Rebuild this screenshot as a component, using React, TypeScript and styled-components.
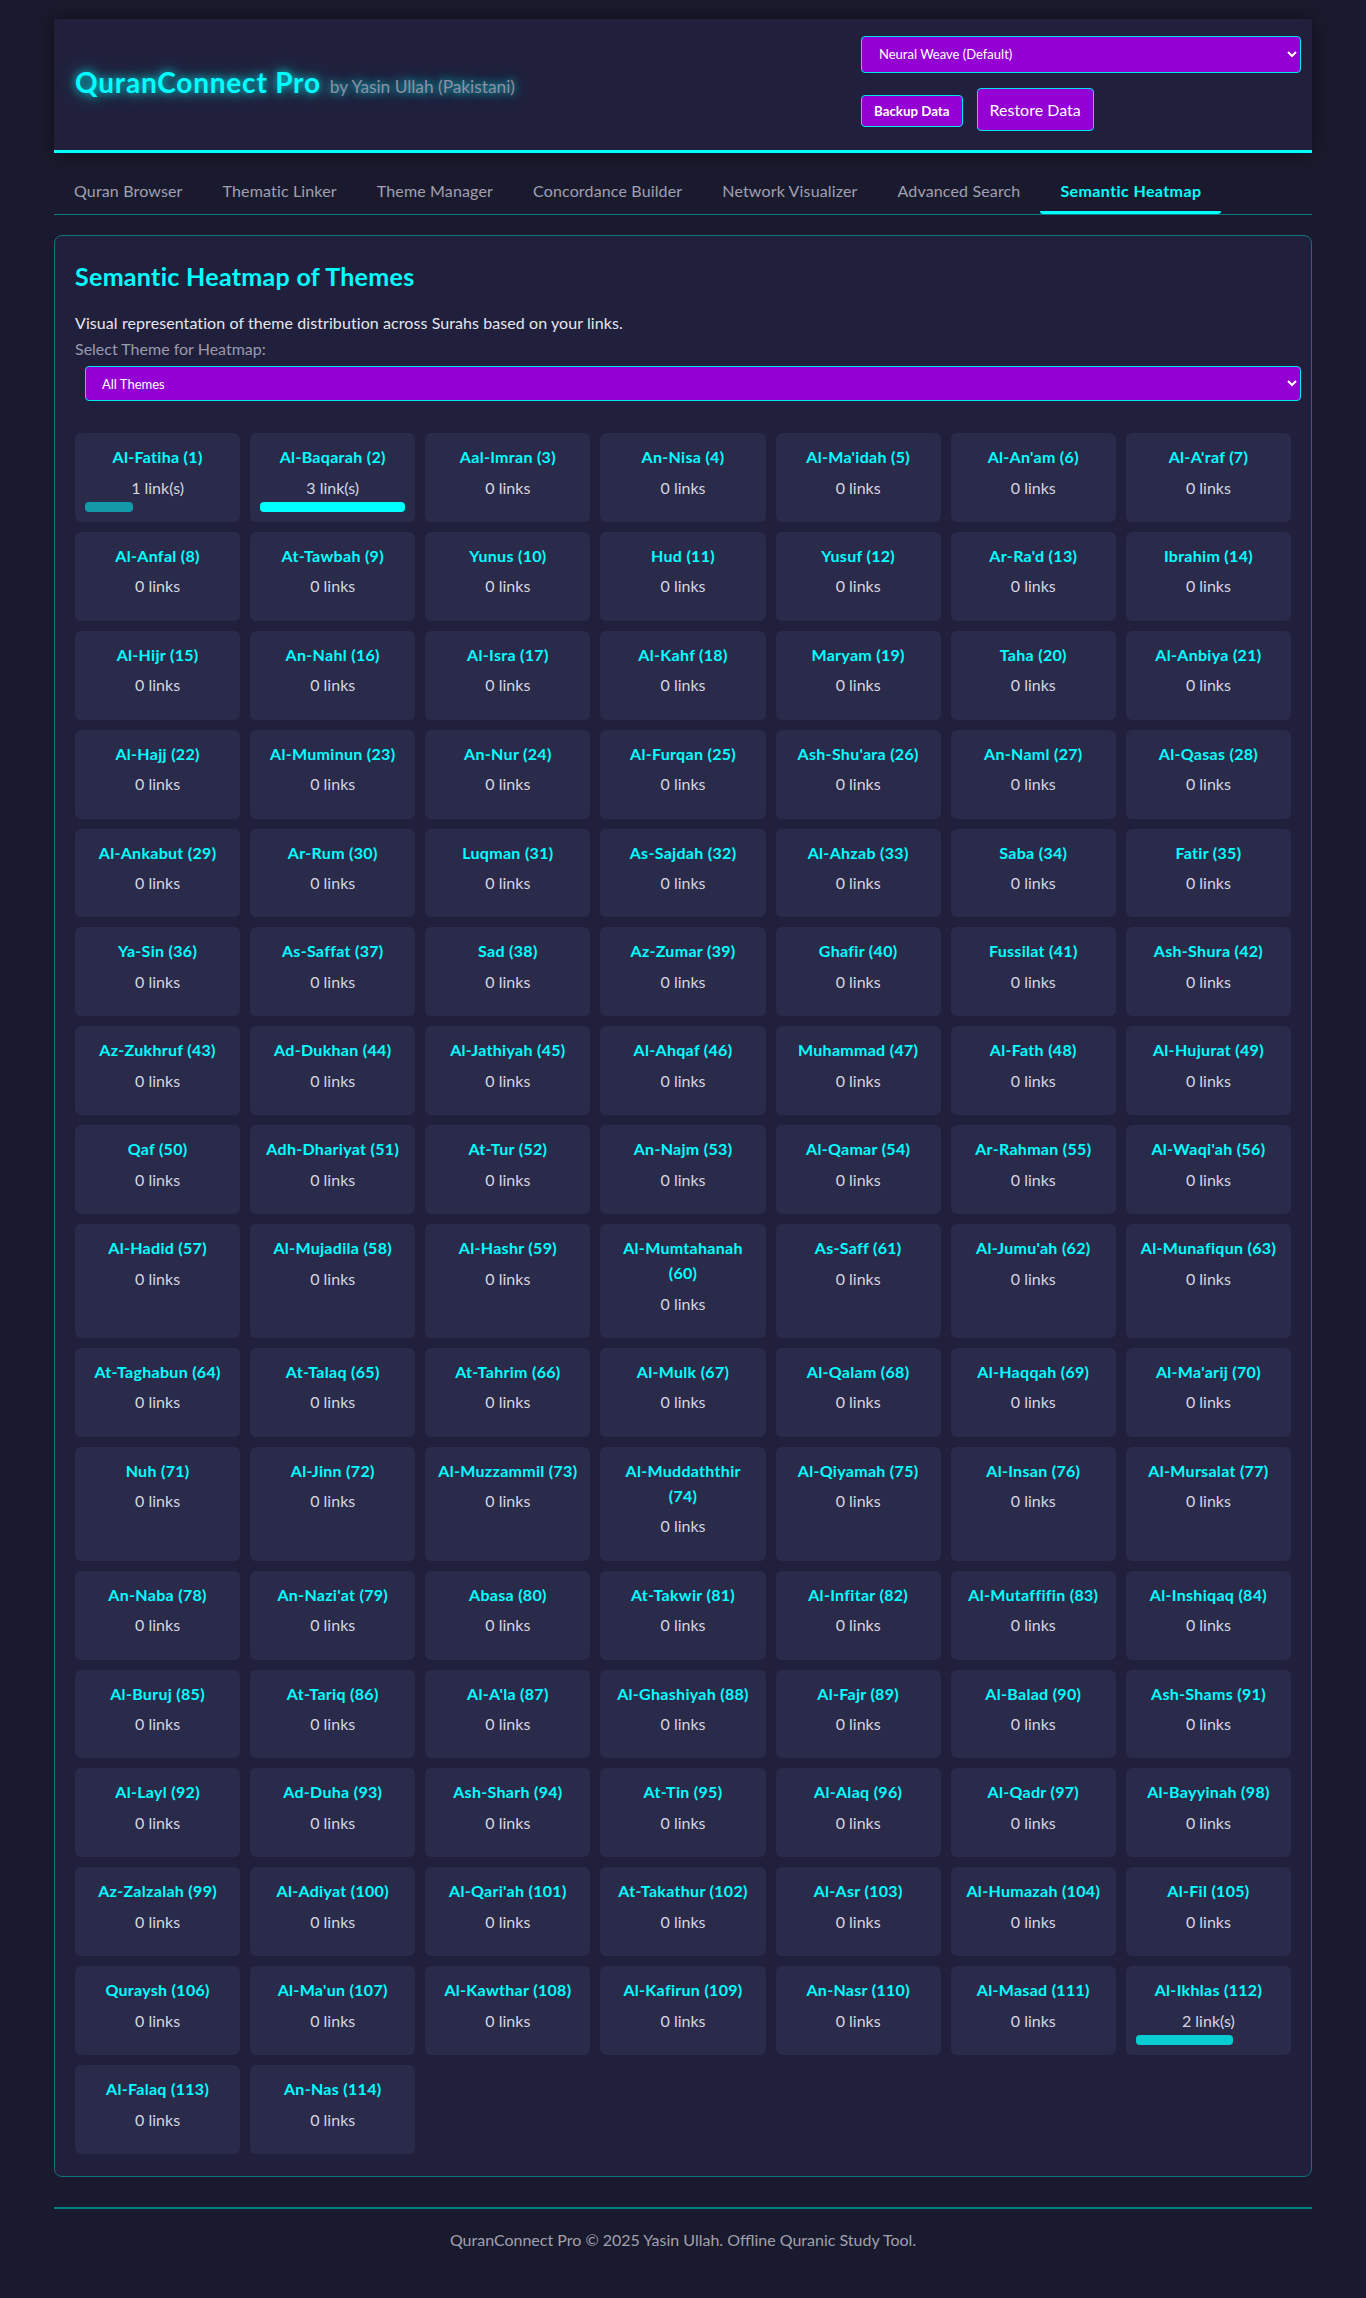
import React from "react";
import styled, { createGlobalStyle, css } from "styled-components";

const GlobalStyle = createGlobalStyle`
  html, body {
    margin: 0;
    padding: 0;
    background: #1a1a2e;
  }
  body {
    font-family: Lato, "Open Sans", "Liberation Sans", sans-serif;
    color: #e0e0e0;
    font-size: 16px;
    line-height: 1.6;
  }
  *, *::before, *::after {
    box-sizing: border-box;
  }
`;

const SURAHS = [
  "Al-Fatiha", "Al-Baqarah", "Aal-Imran", "An-Nisa", "Al-Ma'idah", "Al-An'am", "Al-A'raf",
  "Al-Anfal", "At-Tawbah", "Yunus", "Hud", "Yusuf", "Ar-Ra'd", "Ibrahim",
  "Al-Hijr", "An-Nahl", "Al-Isra", "Al-Kahf", "Maryam", "Taha", "Al-Anbiya",
  "Al-Hajj", "Al-Muminun", "An-Nur", "Al-Furqan", "Ash-Shu'ara", "An-Naml", "Al-Qasas",
  "Al-Ankabut", "Ar-Rum", "Luqman", "As-Sajdah", "Al-Ahzab", "Saba", "Fatir",
  "Ya-Sin", "As-Saffat", "Sad", "Az-Zumar", "Ghafir", "Fussilat", "Ash-Shura",
  "Az-Zukhruf", "Ad-Dukhan", "Al-Jathiyah", "Al-Ahqaf", "Muhammad", "Al-Fath", "Al-Hujurat",
  "Qaf", "Adh-Dhariyat", "At-Tur", "An-Najm", "Al-Qamar", "Ar-Rahman", "Al-Waqi'ah",
  "Al-Hadid", "Al-Mujadila", "Al-Hashr", "Al-Mumtahanah", "As-Saff", "Al-Jumu'ah", "Al-Munafiqun",
  "At-Taghabun", "At-Talaq", "At-Tahrim", "Al-Mulk", "Al-Qalam", "Al-Haqqah", "Al-Ma'arij",
  "Nuh", "Al-Jinn", "Al-Muzzammil", "Al-Muddaththir", "Al-Qiyamah", "Al-Insan", "Al-Mursalat",
  "An-Naba", "An-Nazi'at", "Abasa", "At-Takwir", "Al-Infitar", "Al-Mutaffifin", "Al-Inshiqaq",
  "Al-Buruj", "At-Tariq", "Al-A'la", "Al-Ghashiyah", "Al-Fajr", "Al-Balad", "Ash-Shams",
  "Al-Layl", "Ad-Duha", "Ash-Sharh", "At-Tin", "Al-Alaq", "Al-Qadr", "Al-Bayyinah",
  "Az-Zalzalah", "Al-Adiyat", "Al-Qari'ah", "At-Takathur", "Al-Asr", "Al-Humazah", "Al-Fil",
  "Quraysh", "Al-Ma'un", "Al-Kawthar", "Al-Kafirun", "An-Nasr", "Al-Masad", "Al-Ikhlas",
  "Al-Falaq", "An-Nas",
];

const LINK_COUNTS: Record<number, number> = { 1: 1, 2: 3, 112: 2 };

const TABS = [
  "Quran Browser",
  "Thematic Linker",
  "Theme Manager",
  "Concordance Builder",
  "Network Visualizer",
  "Advanced Search",
  "Semantic Heatmap",
];

const Page = styled.div`
  width: 1258px;
  margin: 0 auto;
  padding: 19px 0 25px;
`;

const Header = styled.header`
  display: flex;
  justify-content: space-between;
  align-items: center;
  height: 134px;
  padding: 16px 11px 19px 21px;
  background: #20203c;
  border-bottom: 3px solid #00ffff;
  box-shadow: 0 0 18px rgba(0, 0, 0, 0.45);
`;

const Title = styled.h1`
  margin: 0;
  font-size: 28px;
  font-weight: 700;
  letter-spacing: 0.8px;
  line-height: 1.2;
  color: #00ffff;
  text-shadow: 0 0 8px rgba(0, 255, 255, 0.8), 0 0 18px rgba(0, 255, 255, 0.45);
`;

const Byline = styled.span`
  margin-left: 9px;
  font-size: 17.3px;
  font-weight: 400;
  letter-spacing: 0;
  color: #8e8ea4;
`;

const Controls = styled.div`
  display: flex;
  flex-direction: column;
  width: 440px;
`;

const purpleControl = css`
  background: #9400d3;
  color: #ffffff;
  border: 1px solid #00e5ee;
  border-radius: 4px;
  font-family: Lato, "Open Sans", sans-serif;
`;

const Select = styled.select<{ $inset?: boolean }>`
  ${purpleControl};
  display: block;
  width: 100%;
  height: ${(p) => (p.$inset ? "35px" : "37px")};
  padding: 0 ${(p) => (p.$inset ? "12px" : "13px")};
  font-size: 13px;
  margin: ${(p) => (p.$inset ? "5px 0 32px 10px" : "0")};
  outline: none;
`;

const ButtonRow = styled.div`
  display: flex;
  align-items: flex-start;
  gap: 14px;
  margin-top: 15px;
`;

const ActionButton = styled.button<{ $large?: boolean }>`
  ${purpleControl};
  cursor: pointer;
  ${(p) =>
    p.$large
      ? css`
          height: 43px;
          padding: 0 12px;
          font-size: 16px;
          font-weight: 400;
        `
      : css`
          height: 32px;
          margin-top: 7px;
          padding: 0 12px;
          font-size: 13.3px;
          font-weight: 700;
        `}
`;

const Nav = styled.nav`
  display: flex;
  margin-top: 18px;
  border-bottom: 1px solid #0b7c80;
`;

const Tab = styled.button<{ $active?: boolean }>`
  background: none;
  border: none;
  border-bottom: 3px solid ${(p) => (p.$active ? "#00ffff" : "transparent")};
  border-radius: 0 0 3px 3px;
  padding: 10px 20px;
  font-family: Lato, "Open Sans", sans-serif;
  font-size: 16px;
  line-height: 20px;
  letter-spacing: ${(p) => (p.$active ? "0.4px" : "0.15px")};
  font-weight: ${(p) => (p.$active ? 700 : 400)};
  color: ${(p) => (p.$active ? "#00ffff" : "#a0a0b0")};
  cursor: pointer;
`;

const Panel = styled.section`
  margin-top: 20px;
  padding: 20px 20px 22px;
  background: #20203c;
  border: 1px solid #13717a;
  border-radius: 8px;
`;

const Heading = styled.h2`
  margin: 4px 0 0;
  font-size: 25px;
  line-height: 32px;
  letter-spacing: 0.3px;
  font-weight: 700;
  color: #00ffff;
`;

const Description = styled.p`
  margin: 19px 0 2px;
  font-size: 16px;
  line-height: 24px;
  letter-spacing: 0.08px;
  color: #e6e6ee;
`;

const Label = styled.label`
  display: block;
  font-size: 16px;
  line-height: 24px;
  color: #9a9aac;
`;

const Grid = styled.div`
  display: grid;
  grid-template-columns: repeat(auto-fill, minmax(150px, 1fr));
  gap: 10px;
`;

const Cell = styled.div`
  padding: 10px;
  background: #2a2a4a;
  border-radius: 6px;
  text-align: center;
`;

const SurahName = styled.div`
  margin-top: 1px;
  font-size: 16px;
  line-height: 25px;
  letter-spacing: 0.3px;
  font-weight: 700;
  color: #00ffff;
`;

const LinkCount = styled.div`
  margin-top: 5.6px;
  font-size: 16px;
  line-height: 25.6px;
  color: #d6d6e0;
`;

const BarTrack = styled.div`
  margin-top: 1.7px;
  height: 10px;
`;

const Bar = styled.div`
  height: 100%;
  border-radius: 4px;
`;

const Footer = styled.footer`
  margin-top: 30px;
  padding: 19px 0 20px;
  border-top: 2px solid #008080;
  text-align: center;
  font-size: 16px;
  line-height: 24px;
  color: #a0a0ac;
`;

export default function App() {
  const max = Math.max(...Object.values(LINK_COUNTS));
  return (
    <>
      <GlobalStyle />
      <Page>
        <Header>
          <Title>
            QuranConnect Pro<Byline>by Yasin Ullah (Pakistani)</Byline>
          </Title>
          <Controls>
            <Select defaultValue="neural">
              <option value="neural">Neural Weave (Default)</option>
            </Select>
            <ButtonRow>
              <ActionButton>Backup Data</ActionButton>
              <ActionButton $large>Restore Data</ActionButton>
            </ButtonRow>
          </Controls>
        </Header>
        <Nav>
          {TABS.map((t) => (
            <Tab key={t} $active={t === "Semantic Heatmap"}>
              {t}
            </Tab>
          ))}
        </Nav>
        <Panel>
          <Heading>Semantic Heatmap of Themes</Heading>
          <Description>
            Visual representation of theme distribution across Surahs based on your links.
          </Description>
          <Label htmlFor="heatmap-theme">Select Theme for Heatmap:</Label>
          <Select id="heatmap-theme" $inset defaultValue="all">
            <option value="all">All Themes</option>
          </Select>
          <Grid>
            {SURAHS.map((name, i) => {
              const n = i + 1;
              const count = LINK_COUNTS[n] || 0;
              const ratio = count / max;
              const alpha = 0.28 + 0.72 * ratio;
              return (
                <Cell key={n}>
                  <SurahName>
                    {name} ({n})
                  </SurahName>
                  <LinkCount>{count > 0 ? `${count} link(s)` : "0 links"}</LinkCount>
                  <BarTrack>
                    {count > 0 && (
                      <Bar
                        style={{
                          width: `${ratio * 100}%`,
                          background: `rgba(0, 255, 255, ${alpha})`,
                        }}
                      />
                    )}
                  </BarTrack>
                </Cell>
              );
            })}
          </Grid>
        </Panel>
        <Footer>QuranConnect Pro © 2025 Yasin Ullah. Offline Quranic Study Tool.</Footer>
      </Page>
    </>
  );
}
